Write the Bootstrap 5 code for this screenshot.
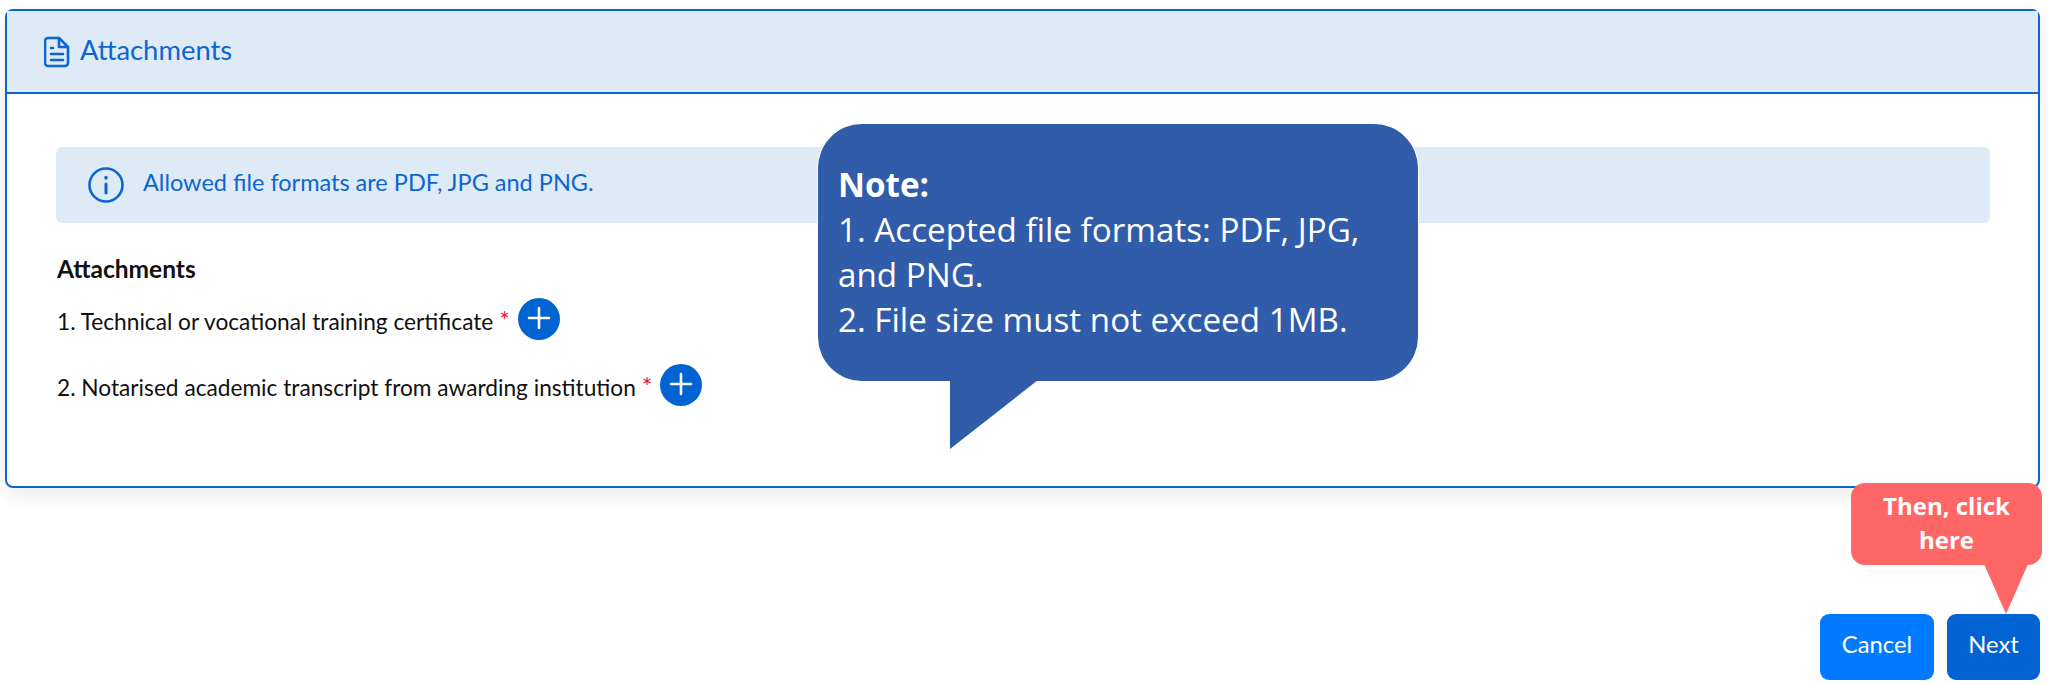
<!DOCTYPE html>
<html lang="en">
<head>
    <meta charset="UTF-8">
    <title>Attachments</title>
    <link rel="stylesheet" href="https://cdn.jsdelivr.net/npm/bootstrap@5.3.3/dist/css/bootstrap.min.css">
<style>
    body{
        background-color: #fff;
        font-family: "Lato", "Noto Sans", sans-serif;
        color: #111;
        height: 685px;
        overflow: hidden;
        position: relative;
    }
    .page-wrap{
        padding: 9px 8px 0 5px;
    }
    .attach-card{
        height: 479px;
        border: 2.5px solid #0b66d0;
        border-radius: 8px;
        box-shadow: 0 8px 20px rgba(0,0,0,.08);
    }
    .attach-head{
        height: 83px;
        background-color: #dfeaf7;
        border-bottom: 2.5px solid #0b66d0;
        color: #0b66d0;
        font-size: 27.4px;
        padding: 0 0 0 37px;
        gap: 10px;
    }
    .attach-head span, .info-box span{
        padding-bottom: 4px;
    }
    .attach-body{
        padding: 53px 48px 0 49px;
    }
    .info-box{
        height: 76px;
        background-color: #dfeaf7;
        color: #0b66d0;
        border-radius: 6px;
        font-size: 23.5px;
        padding-left: 32px;
        gap: 19px;
    }
    .attach-title{
        font-size: 24.5px;
        font-weight: 700;
        margin: 31px 0 0 1px;
        line-height: 30px;
    }
    .attach-row{
        font-size: 22.7px;
        margin-left: 1px;
        gap: 8px;
    }
    .attach-row > span{
        padding-top: 3px;
    }
    .attach-row .req{
        color: #f0143c;
        font-size: 25px;
    }
    .row-one{
        margin-top: 14px;
    }
    .row-two{
        margin-top: 24px;
    }
    .plus-btn{
        width: 42px;
        height: 42px;
        flex: none;
    }
    .action-bar{
        margin-top: 126px;
        gap: 13px;
    }
    .action-bar .btn{
        height: 66px;
        border: 0;
        border-radius: 9px;
        font-size: 23.8px;
        color: #fff;
        padding-bottom: 10px;
    }
    .btn-cancel{
        width: 114px;
        background-color: #007bff;
    }
    .btn-next{
        width: 93px;
        background-color: #0063d1;
    }
    .note-bubble{
        position: absolute;
        left: 818px;
        top: 124px;
        width: 600px;
        height: 257px;
        background-color: #305ca9;
        border-radius: 44px;
        box-shadow: 0 0 0 1px #fff;
        color: #fff;
        font-family: "Open Sans", "Noto Sans", sans-serif;
        font-size: 33.2px;
        line-height: 45px;
        padding: 38px 20px 0 20px;
    }
    .note-tail{
        position: absolute;
        left: 950px;
        top: 380px;
    }
    .click-bubble{
        position: absolute;
        left: 1851px;
        top: 483px;
        width: 191px;
        height: 82px;
        background-color: #ff6666;
        border-radius: 14px;
        color: #fff;
        font-family: "Open Sans", "Noto Sans", sans-serif;
        font-weight: 700;
        font-size: 24px;
        line-height: 34px;
        text-align: center;
        padding: 6px 8px 0 8px;
    }
    .click-tail{
        position: absolute;
        left: 1984px;
        top: 564px;
    }
</style>
</head>
<body>
    <div class="page-wrap">
        <div class="card attach-card">
            <div class="attach-head d-flex align-items-center">
                <svg width="26" height="32" viewBox="0 0 26 32" fill="none" stroke="#0b66d0" stroke-width="2.6" stroke-linecap="round" stroke-linejoin="round">
                    <path d="M4 2h11l9 9v16a3 3 0 0 1-3 3H4a3 3 0 0 1-3-3V5a3 3 0 0 1 3-3z"/>
                    <path d="M15 2v9h9"/>
                    <path d="M7 12h2M7 18h12M7 24h12"/>
                </svg>
                <span>Attachments</span>
            </div>
            <div class="attach-body">
                <div class="info-box d-flex align-items-center">
                    <svg width="36" height="36" viewBox="0 0 36 36" fill="none" stroke="#0b66d0" stroke-width="2.6" stroke-linecap="round">
                        <circle cx="18" cy="18" r="16.5"/>
                        <path d="M18 17v9" stroke-width="3"/>
                        <path d="M18 10.5v.5" stroke-width="3.4"/>
                    </svg>
                    <span>Allowed file formats are PDF, JPG and PNG.</span>
                </div>
                <div class="attach-title">Attachments</div>
                <div class="attach-row row-one d-flex align-items-center">
                    <span>1. Technical or vocational training certificate <span class="req">*</span></span>
                    <svg class="plus-btn" viewBox="0 0 42 42">
                        <circle cx="21" cy="21" r="21" fill="#0063d1"/>
                        <path d="M21 10v20M11 20h20" stroke="#fff" stroke-width="2.6" stroke-linecap="round"/>
                    </svg>
                </div>
                <div class="attach-row row-two d-flex align-items-center">
                    <span>2. Notarised academic transcript from awarding institution <span class="req">*</span></span>
                    <svg class="plus-btn" viewBox="0 0 42 42">
                        <circle cx="21" cy="21" r="21" fill="#0063d1"/>
                        <path d="M21 10v20M11 20h20" stroke="#fff" stroke-width="2.6" stroke-linecap="round"/>
                    </svg>
                </div>
            </div>
        </div>
        <div class="action-bar d-flex justify-content-end">
            <button type="button" class="btn btn-cancel">Cancel</button>
            <button type="button" class="btn btn-next">Next</button>
        </div>
    </div>

    <div class="note-bubble">
        <strong>Note:</strong><br>
        1. Accepted file formats: PDF, JPG, and PNG.<br>
        2. File size must not exceed 1MB.
    </div>
    <svg class="note-tail" width="90" height="70" viewBox="0 0 90 70"><path d="M0 0H88L0 69z" fill="#305ca9"/></svg>

    <div class="click-bubble">Then, click here</div>
    <svg class="click-tail" width="44" height="51" viewBox="0 0 44 51"><path d="M0 0H44L22 50z" fill="#ff6666"/></svg>
</body>
</html>
